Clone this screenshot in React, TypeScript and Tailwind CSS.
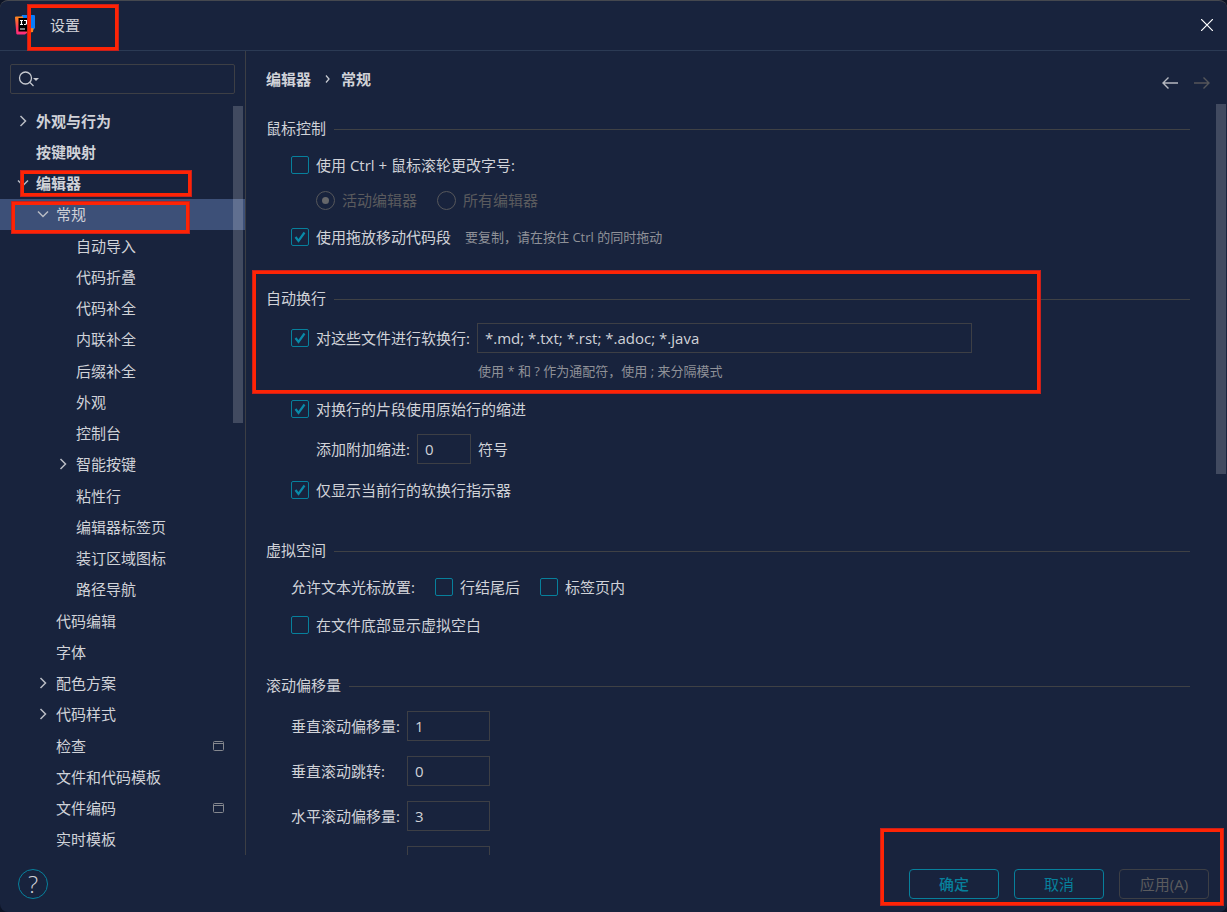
import { useState, type ReactNode } from "react"
import clsx from "clsx"

interface TreeItem {
  label: string
  level: 0 | 1 | 2
  state?: "open" | "closed"
  project?: boolean
}

const TREE: TreeItem[] = [
  { label: "外观与行为", level: 0, state: "closed" },
  { label: "按键映射", level: 0 },
  { label: "编辑器", level: 0, state: "open" },
  { label: "常规", level: 1, state: "open" },
  { label: "自动导入", level: 2 },
  { label: "代码折叠", level: 2 },
  { label: "代码补全", level: 2 },
  { label: "内联补全", level: 2 },
  { label: "后缀补全", level: 2 },
  { label: "外观", level: 2 },
  { label: "控制台", level: 2 },
  { label: "智能按键", level: 2, state: "closed" },
  { label: "粘性行", level: 2 },
  { label: "编辑器标签页", level: 2 },
  { label: "装订区域图标", level: 2 },
  { label: "路径导航", level: 2 },
  { label: "代码编辑", level: 1 },
  { label: "字体", level: 1 },
  { label: "配色方案", level: 1, state: "closed" },
  { label: "代码样式", level: 1, state: "closed" },
  { label: "检查", level: 1, project: true },
  { label: "文件和代码模板", level: 1 },
  { label: "文件编码", level: 1, project: true },
  { label: "实时模板", level: 1 },
]

const INDENT = { 0: "pl-4", 1: "pl-9", 2: "pl-14" }

/* Red frame that highlights a part of the dialog */
const Frame = ({ className }: { className: string }) => (
  <span
    className={clsx(
      "pointer-events-none absolute z-20 border-4 border-[#fe2405] outline-1 -outline-offset-1 outline-[#c9201c]",
      className
    )}
  />
)

const AppLogo = () => (
  <svg className="size-5" viewBox="0 0 20 20" aria-hidden="true">
    <defs>
      <linearGradient id="logo-warm" x1="0" y1="0" x2="0" y2="1">
        <stop offset="0" stopColor="#ff8a1c" />
        <stop offset="0.6" stopColor="#fe3a5b" />
        <stop offset="1" stopColor="#fe2c80" />
      </linearGradient>
    </defs>
    <path d="M7 0h12a1 1 0 0 1 1 1v12l-4 4L5 6z" fill="#087cfa" />
    <path d="M18.500 13l-.5 4-8 1.500 3-5z" fill="#fc801d" />
    <path d="M0 2.500Q0 1.500 1 1.500h7v12l4 4-2 2H2.500Q1.500 19.500 1.300 18.500z" fill="url(#logo-warm)" />
    <rect x="3.500" y="3" width="12.500" height="13.500" fill="#000" />
    <path d="M5 5.500h3M6.500 5.500v4M5 9.500h3M9 5.500h2.500v2.800q0 1.200-1.200 1.200H9" stroke="#fff" strokeWidth="1.200" fill="none" />
    <path d="M5 14h5" stroke="#fff" strokeWidth="1.200" />
  </svg>
)

const Chevron = ({ open }: { open: boolean }) => (
  <svg className="size-3.5" viewBox="0 0 14 14" fill="none" stroke="#b9bcc4" strokeWidth="1.500" aria-hidden="true">
    {open ? <path d="M2 4.500l5 5 5-5" /> : <path d="M4.500 2l5 5-5 5" />}
  </svg>
)

const ProjectIcon = () => (
  <svg className="h-2.5 w-3" viewBox="0 0 12 10" fill="none" stroke="#85888f" aria-hidden="true">
    <rect x="0.500" y="0.500" width="10" height="9" rx="1" />
    <path d="M1 2.500h9" />
  </svg>
)

const Checkbox = ({ label, defaultChecked }: { label: string; defaultChecked?: boolean }) => (
  <label className="flex items-center gap-[7px]">
    <span className="grid place-items-center">
      <input
        type="checkbox"
        defaultChecked={defaultChecked}
        className="peer col-start-1 row-start-1 size-[18px] appearance-none rounded-xs border border-[#07809c]"
      />
      <svg
        className="pointer-events-none invisible col-start-1 row-start-1 size-3 peer-checked:visible"
        viewBox="0 0 12 12"
        fill="none"
        stroke="#0a8aa8"
        strokeWidth="2.200"
        aria-hidden="true"
      >
        <path d="M1.500 6l3 4L10.500 1.500" />
      </svg>
    </span>
    {label}
  </label>
)

const Radio = ({ label, defaultChecked }: { label: string; defaultChecked?: boolean }) => (
  <label className="flex items-center gap-[7px] text-[#5b5b5e]">
    <span className="grid place-items-center">
      <input
        type="radio"
        name="zoom-scope"
        disabled
        defaultChecked={defaultChecked}
        className="peer col-start-1 row-start-1 size-[19px] appearance-none rounded-full border border-[#56575b]"
      />
      <span className="invisible col-start-1 row-start-1 size-[7px] rounded-full bg-[#66676a] peer-checked:visible" />
    </span>
    {label}
  </label>
)

const TextField = ({ id, value, label, className }: { id: string; value: string; label?: string; className: string }) => (
  <input
    id={id}
    type="text"
    aria-label={label}
    defaultValue={value}
    className={clsx("h-[30px] border border-[#3d3f45] bg-transparent px-[7px] outline-none", className)}
  />
)

const Row = ({ className, children }: { className?: string; children: ReactNode }) => (
  <div className={clsx("flex h-[30px] items-center", className)}>{children}</div>
)

const SectionTitle = ({ children }: { children: ReactNode }) => (
  <div className="flex h-[26px] items-center gap-2">
    <h2 className="pb-0.5">{children}</h2>
    <span className="h-px flex-1 bg-[#3f4145]" />
  </div>
)

const Sidebar = () => {
  const [selected, setSelected] = useState("常规")

  return (
    <aside className="relative flex w-[246px] shrink-0 flex-col border-r border-[#3c3e44]">
      <label className="mx-2.5 mt-[13px] mb-[11px] flex h-[30px] items-center rounded-xs border border-[#3d3f45] pl-[7px]">
        <svg className="h-5 w-6 shrink-0" viewBox="0 0 24 20" fill="none" stroke="#c5c8cf" strokeWidth="1.300" aria-hidden="true">
          <circle cx="7.500" cy="9" r="6" />
          <path d="M12 13.500l3.500 3.500" />
          <path d="M15 9h6l-3 3z" fill="#c5c8cf" stroke="none" />
        </svg>
        <input type="text" aria-label="搜索" className="min-w-0 flex-1 bg-transparent outline-none" />
      </label>

      <ul className="flex min-h-0 flex-1 flex-col">
        {TREE.map((item) => (
          <li
            key={item.label + item.level}
            className={clsx("relative min-h-0 flex-1", selected === item.label && item.level === 1 && "bg-[#3d5078]")}
          >
            <button
              type="button"
              onClick={() => setSelected(item.label)}
              className={clsx(
                "flex h-full w-full items-center gap-1.5 pr-5 text-left",
                INDENT[item.level],
                item.level === 0 && "font-bold"
              )}
            >
              <span className="size-3.5">{item.state && <Chevron open={item.state === "open"} />}</span>
              <span className="flex-1">{item.label}</span>
              {item.project && <ProjectIcon />}
            </button>
            {item.label === "编辑器" && <Frame className="top-0.5 left-5 h-[27px] w-[172px]" />}
            {item.label === "常规" && <Frame className="top-0.5 left-[11px] h-[33px] w-[179px]" />}
          </li>
        ))}
      </ul>

      {/* Scrollbar thumb */}
      <span className="absolute top-[55px] right-0.5 h-[317px] w-2.5 bg-white/18" />
    </aside>
  )
}

const OFFSETS = [
  { id: "v-offset", label: "垂直滚动偏移量:", value: "1" },
  { id: "v-jump", label: "垂直滚动跳转:", value: "0" },
  { id: "h-offset", label: "水平滚动偏移量:", value: "3" },
]

const Content = () => (
  <main className="flex min-w-0 flex-1 flex-col">
    <div className="flex h-[53px] shrink-0 items-center justify-between pt-0.5 pr-[17px] pl-5">
      <nav className="flex items-center font-bold">
        <a href="#editor">编辑器</a>
        <svg className="mr-2.5 ml-3.5 h-2 w-1.5" viewBox="0 0 6 8" fill="none" stroke="#c5c8cf" strokeWidth="1.300" aria-hidden="true">
          <path d="M1 0.500L4 4 1 7.500" />
        </svg>
        <a href="#general">常规</a>
      </nav>
      <div className="flex gap-4 pt-2">
        <button type="button" aria-label="后退">
          <svg className="h-3 w-4" viewBox="0 0 16 12" fill="none" stroke="#b5b8c0" strokeWidth="1.400">
            <path d="M6.500 0.500L1 6l5.500 5.500M1 6h15" />
          </svg>
        </button>
        <button type="button" aria-label="前进" disabled>
          <svg className="h-3 w-4" viewBox="0 0 16 12" fill="none" stroke="#55565a" strokeWidth="1.400">
            <path d="M9.500 0.500L15 6l-5.500 5.500M15 6H0" />
          </svg>
        </button>
      </div>
    </div>

    <div className="relative min-h-0 flex-1 overflow-hidden pt-3 pr-[37px] pl-5">
      <section>
        <SectionTitle>鼠标控制</SectionTitle>
        <div className="pl-[25px]">
          <Row className="mt-2">
            <Checkbox label="使用 Ctrl + 鼠标滚轮更改字号:" />
          </Row>
          <Row className="mt-[5px] gap-5 pl-[25px]">
            <Radio label="活动编辑器" defaultChecked />
            <Radio label="所有编辑器" />
          </Row>
          <Row className="mt-[7px] gap-3.5">
            <Checkbox label="使用拖放移动代码段" defaultChecked />
            <span className="text-[13px] text-[#8f9198]">要复制，请在按住 Ctrl 的同时拖动</span>
          </Row>
        </div>
      </section>

      <section className="relative mt-[34px]">
        <SectionTitle>自动换行</SectionTitle>
        <div className="pl-[25px]">
          <Row className="mt-[11px] gap-[7px]">
            <Checkbox label="对这些文件进行软换行:" defaultChecked />
            <TextField
              id="soft-wrap-files"
              label="软换行文件模式"
              value="*.md; *.txt; *.rst; *.adoc; *.java"
              className="w-[495px]"
            />
          </Row>
          <p className="mt-2 pl-[187px] text-[13px] leading-5 text-[#8f9198]">使用 * 和 ? 作为通配符，使用 ; 来分隔模式</p>
          <Row className="mt-[13px]">
            <Checkbox label="对换行的片段使用原始行的缩进" defaultChecked />
          </Row>
          <Row className="mt-2.5 gap-[7px] pl-[25px]">
            <label htmlFor="extra-indent">添加附加缩进:</label>
            <TextField id="extra-indent" value="0" className="w-[54px]" />
            <span>符号</span>
          </Row>
          <Row className="mt-[11px]">
            <Checkbox label="仅显示当前行的软换行指示器" defaultChecked />
          </Row>
        </div>
        <Frame className="-top-4 -left-3.5 h-[124px] w-[789px]" />
      </section>

      <section className="mt-[33px]">
        <SectionTitle>虚拟空间</SectionTitle>
        <div className="pl-[25px]">
          <Row className="mt-2 gap-5">
            <span>允许文本光标放置:</span>
            <Checkbox label="行结尾后" />
            <Checkbox label="标签页内" />
          </Row>
          <Row className="mt-2">
            <Checkbox label="在文件底部显示虚拟空白" />
          </Row>
        </div>
      </section>

      <section className="mt-[33px]">
        <SectionTitle>滚动偏移量</SectionTitle>
        <div className="mt-3 grid grid-cols-[auto_1fr] items-center gap-x-[7px] gap-y-[15px] pl-[25px]">
          {OFFSETS.map((row) => (
            <div key={row.id} className="contents">
              <label htmlFor={row.id}>{row.label}</label>
              <TextField id={row.id} value={row.value} className="w-[83px]" />
            </div>
          ))}
          <TextField id="h-jump" label="水平滚动跳转" value="" className="col-start-2 w-[83px]" />
        </div>
      </section>

      {/* Scrollbar thumb */}
      <span className="absolute top-0 right-px h-[370px] w-2.5 bg-white/18" />
    </div>
  </main>
)

export default function App() {
  return (
    <div className="h-screen bg-[#0d1426]">
      <div className="flex h-full flex-col overflow-hidden rounded-lg border-t border-[#45484f] bg-[#18233d] font-['Open_Sans','Noto_Sans_CJK_SC',sans-serif] text-[15px] leading-5 text-[#d0d2d8]">
        <header className="relative flex h-[50px] shrink-0 items-center justify-between border-b border-[#2b3a54] pr-3.5 pb-0.5 pl-[15px]">
          <div className="flex items-center gap-[15px]">
            <AppLogo />
            <h1>设置</h1>
          </div>
          <button type="button" aria-label="关闭">
            <svg className="size-3" viewBox="0 0 12 12" stroke="#fff" strokeWidth="1.200">
              <path d="M0 0l12 12M12 0L0 12" />
            </svg>
          </button>
          <Frame className="top-[3px] left-[27px] h-[47px] w-[92px]" />
        </header>

        <div className="flex min-h-0 flex-1">
          <Sidebar />
          <Content />
        </div>

        <footer className="relative flex h-[57px] shrink-0 items-center justify-between px-[18px]">
          <button
            type="button"
            aria-label="帮助"
            className="flex size-[30px] items-center justify-center rounded-full border border-[#07809c] text-[24px] font-light"
          >
            ?
          </button>
          <div className="flex gap-[15px]">
            <button type="button" className="h-[30px] w-[90px] rounded-sm border border-[#07809c] font-medium text-[#07809c]">
              确定
            </button>
            <button type="button" className="h-[30px] w-[90px] rounded-sm border border-[#07809c] text-[#07809c]">
              取消
            </button>
            <button type="button" disabled className="h-[30px] w-[90px] rounded-sm border border-[#3d3f45] text-[#5b5b5e]">
              应用(A)
            </button>
          </div>
          <Frame className="right-[3px] bottom-1.5 h-[78px] w-[344px]" />
        </footer>
      </div>
    </div>
  )
}
